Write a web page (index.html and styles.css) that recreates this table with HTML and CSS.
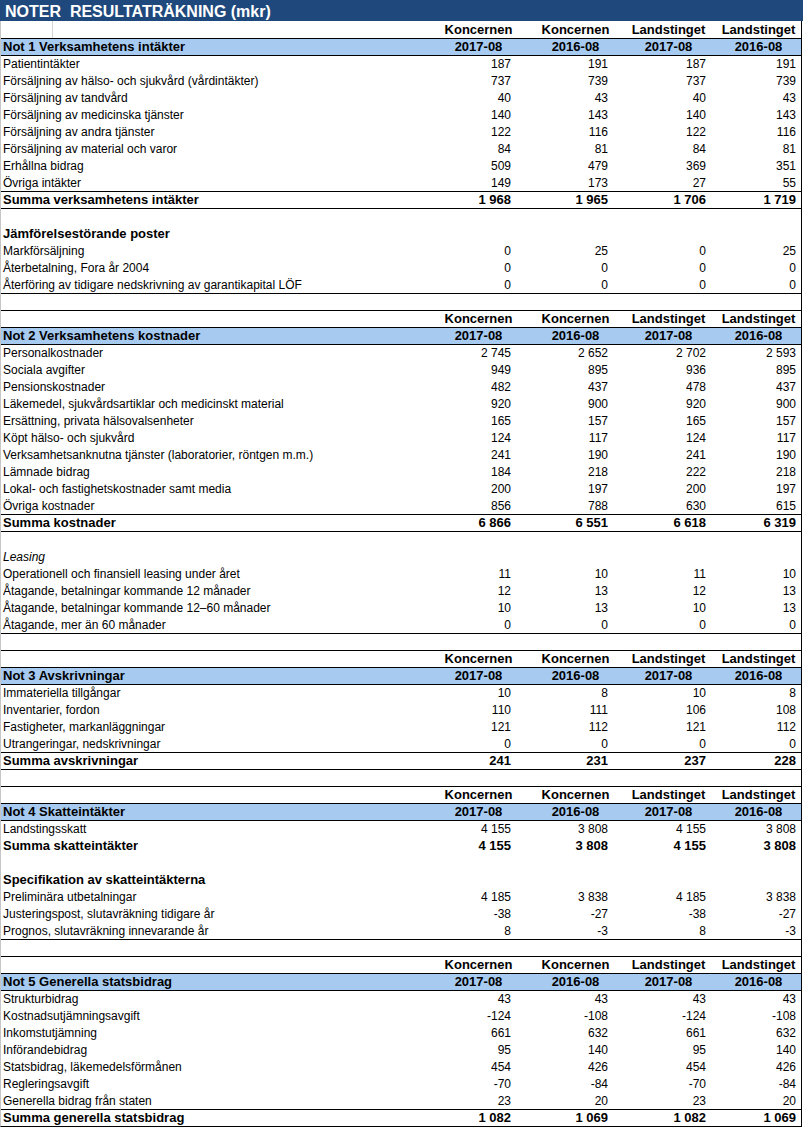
FILE: index.html
```html
<!DOCTYPE html>
<html lang="sv">
<head>
<meta charset="utf-8">
<title>Noter resultaträkning</title>
<link rel="stylesheet" href="styles.css">
</head>
<body>
<div class="title">NOTER  RESULTATRÄKNING (mkr)</div>
<div class="sheet">
  <!-- Not 1 -->
  <div class="row hdr"><div class="lab"><div class="gridmark"></div></div><div class="c c1">Koncernen</div><div class="c c2">Koncernen</div><div class="c c3">Landstinget</div><div class="c c4">Landstinget</div></div>
  <div class="row note lt"><div class="lab">Not 1 Verksamhetens intäkter</div><div class="c c1">2017-08</div><div class="c c2">2016-08</div><div class="c c3">2017-08</div><div class="c c4">2016-08</div></div>
  <div class="row lt"><div class="lab">Patientintäkter</div><div class="n">187</div><div class="n">191</div><div class="n">187</div><div class="n">191</div></div>
  <div class="row"><div class="lab">Försäljning av hälso- och sjukvård (vårdintäkter)</div><div class="n">737</div><div class="n">739</div><div class="n">737</div><div class="n">739</div></div>
  <div class="row"><div class="lab">Försäljning av tandvård</div><div class="n">40</div><div class="n">43</div><div class="n">40</div><div class="n">43</div></div>
  <div class="row"><div class="lab">Försäljning av medicinska tjänster</div><div class="n">140</div><div class="n">143</div><div class="n">140</div><div class="n">143</div></div>
  <div class="row"><div class="lab">Försäljning av andra tjänster</div><div class="n">122</div><div class="n">116</div><div class="n">122</div><div class="n">116</div></div>
  <div class="row"><div class="lab">Försäljning av material och varor</div><div class="n">84</div><div class="n">81</div><div class="n">84</div><div class="n">81</div></div>
  <div class="row"><div class="lab">Erhållna bidrag</div><div class="n">509</div><div class="n">479</div><div class="n">369</div><div class="n">351</div></div>
  <div class="row"><div class="lab">Övriga intäkter</div><div class="n">149</div><div class="n">173</div><div class="n">27</div><div class="n">55</div></div>
  <div class="row sum lt"><div class="lab">Summa verksamhetens intäkter</div><div class="n">1 968</div><div class="n">1 965</div><div class="n">1 706</div><div class="n">1 719</div></div>
  <div class="row lt"></div>
  <div class="row sub"><div class="lab">Jämförelsestörande poster</div></div>
  <div class="row"><div class="lab">Markförsäljning</div><div class="n">0</div><div class="n">25</div><div class="n">0</div><div class="n">25</div></div>
  <div class="row"><div class="lab">Återbetalning, Fora år 2004</div><div class="n">0</div><div class="n">0</div><div class="n">0</div><div class="n">0</div></div>
  <div class="row"><div class="lab">Återföring av tidigare nedskrivning av garantikapital LÖF</div><div class="n">0</div><div class="n">0</div><div class="n">0</div><div class="n">0</div></div>
  <div class="row lt"></div>

  <!-- Not 2 -->
  <div class="row hdr lt"><div class="lab"></div><div class="c c1">Koncernen</div><div class="c c2">Koncernen</div><div class="c c3">Landstinget</div><div class="c c4">Landstinget</div></div>
  <div class="row note lt"><div class="lab">Not 2 Verksamhetens kostnader</div><div class="c c1">2017-08</div><div class="c c2">2016-08</div><div class="c c3">2017-08</div><div class="c c4">2016-08</div></div>
  <div class="row lt"><div class="lab">Personalkostnader</div><div class="n">2 745</div><div class="n">2 652</div><div class="n">2 702</div><div class="n">2 593</div></div>
  <div class="row"><div class="lab">Sociala avgifter</div><div class="n">949</div><div class="n">895</div><div class="n">936</div><div class="n">895</div></div>
  <div class="row"><div class="lab">Pensionskostnader</div><div class="n">482</div><div class="n">437</div><div class="n">478</div><div class="n">437</div></div>
  <div class="row"><div class="lab">Läkemedel, sjukvårdsartiklar och medicinskt material</div><div class="n">920</div><div class="n">900</div><div class="n">920</div><div class="n">900</div></div>
  <div class="row"><div class="lab">Ersättning, privata hälsovalsenheter</div><div class="n">165</div><div class="n">157</div><div class="n">165</div><div class="n">157</div></div>
  <div class="row"><div class="lab">Köpt hälso- och sjukvård</div><div class="n">124</div><div class="n">117</div><div class="n">124</div><div class="n">117</div></div>
  <div class="row"><div class="lab">Verksamhetsanknutna tjänster (laboratorier, röntgen m.m.)</div><div class="n">241</div><div class="n">190</div><div class="n">241</div><div class="n">190</div></div>
  <div class="row"><div class="lab">Lämnade bidrag</div><div class="n">184</div><div class="n">218</div><div class="n">222</div><div class="n">218</div></div>
  <div class="row"><div class="lab">Lokal- och fastighetskostnader samt media</div><div class="n">200</div><div class="n">197</div><div class="n">200</div><div class="n">197</div></div>
  <div class="row"><div class="lab">Övriga kostnader</div><div class="n">856</div><div class="n">788</div><div class="n">630</div><div class="n">615</div></div>
  <div class="row sum lt"><div class="lab">Summa kostnader</div><div class="n">6 866</div><div class="n">6 551</div><div class="n">6 618</div><div class="n">6 319</div></div>
  <div class="row lt"></div>
  <div class="row it"><div class="lab">Leasing</div></div>
  <div class="row"><div class="lab">Operationell och finansiell leasing under året</div><div class="n">11</div><div class="n">10</div><div class="n">11</div><div class="n">10</div></div>
  <div class="row"><div class="lab">Åtagande, betalningar kommande 12 månader</div><div class="n">12</div><div class="n">13</div><div class="n">12</div><div class="n">13</div></div>
  <div class="row"><div class="lab">Åtagande, betalningar kommande 12–60 månader</div><div class="n">10</div><div class="n">13</div><div class="n">10</div><div class="n">13</div></div>
  <div class="row"><div class="lab">Åtagande, mer än 60 månader</div><div class="n">0</div><div class="n">0</div><div class="n">0</div><div class="n">0</div></div>
  <div class="row lt"></div>

  <!-- Not 3 -->
  <div class="row hdr lt"><div class="lab"></div><div class="c c1">Koncernen</div><div class="c c2">Koncernen</div><div class="c c3">Landstinget</div><div class="c c4">Landstinget</div></div>
  <div class="row note lt"><div class="lab">Not 3 Avskrivningar</div><div class="c c1">2017-08</div><div class="c c2">2016-08</div><div class="c c3">2017-08</div><div class="c c4">2016-08</div></div>
  <div class="row lt"><div class="lab">Immateriella tillgångar</div><div class="n">10</div><div class="n">8</div><div class="n">10</div><div class="n">8</div></div>
  <div class="row"><div class="lab">Inventarier, fordon</div><div class="n">110</div><div class="n">111</div><div class="n">106</div><div class="n">108</div></div>
  <div class="row"><div class="lab">Fastigheter, markanläggningar</div><div class="n">121</div><div class="n">112</div><div class="n">121</div><div class="n">112</div></div>
  <div class="row"><div class="lab">Utrangeringar, nedskrivningar</div><div class="n">0</div><div class="n">0</div><div class="n">0</div><div class="n">0</div></div>
  <div class="row sum lt"><div class="lab">Summa avskrivningar</div><div class="n">241</div><div class="n">231</div><div class="n">237</div><div class="n">228</div></div>
  <div class="row lt"></div>

  <!-- Not 4 -->
  <div class="row hdr lt"><div class="lab"></div><div class="c c1">Koncernen</div><div class="c c2">Koncernen</div><div class="c c3">Landstinget</div><div class="c c4">Landstinget</div></div>
  <div class="row note lt"><div class="lab">Not 4 Skatteintäkter</div><div class="c c1">2017-08</div><div class="c c2">2016-08</div><div class="c c3">2017-08</div><div class="c c4">2016-08</div></div>
  <div class="row lt"><div class="lab">Landstingsskatt</div><div class="n">4 155</div><div class="n">3 808</div><div class="n">4 155</div><div class="n">3 808</div></div>
  <div class="row sum"><div class="lab">Summa skatteintäkter</div><div class="n">4 155</div><div class="n">3 808</div><div class="n">4 155</div><div class="n">3 808</div></div>
  <div class="row"></div>
  <div class="row sub"><div class="lab">Specifikation av skatteintäkterna</div></div>
  <div class="row"><div class="lab">Preliminära utbetalningar</div><div class="n">4 185</div><div class="n">3 838</div><div class="n">4 185</div><div class="n">3 838</div></div>
  <div class="row"><div class="lab">Justeringspost, slutavräkning tidigare år</div><div class="n">-38</div><div class="n">-27</div><div class="n">-38</div><div class="n">-27</div></div>
  <div class="row"><div class="lab">Prognos, slutavräkning innevarande år</div><div class="n">8</div><div class="n">-3</div><div class="n">8</div><div class="n">-3</div></div>
  <div class="row lt"></div>

  <!-- Not 5 -->
  <div class="row hdr lt"><div class="lab"></div><div class="c c1">Koncernen</div><div class="c c2">Koncernen</div><div class="c c3">Landstinget</div><div class="c c4">Landstinget</div></div>
  <div class="row note lt"><div class="lab">Not 5 Generella statsbidrag</div><div class="c c1">2017-08</div><div class="c c2">2016-08</div><div class="c c3">2017-08</div><div class="c c4">2016-08</div></div>
  <div class="row lt"><div class="lab">Strukturbidrag</div><div class="n">43</div><div class="n">43</div><div class="n">43</div><div class="n">43</div></div>
  <div class="row"><div class="lab">Kostnadsutjämningsavgift</div><div class="n">-124</div><div class="n">-108</div><div class="n">-124</div><div class="n">-108</div></div>
  <div class="row"><div class="lab">Inkomstutjämning</div><div class="n">661</div><div class="n">632</div><div class="n">661</div><div class="n">632</div></div>
  <div class="row"><div class="lab">Införandebidrag</div><div class="n">95</div><div class="n">140</div><div class="n">95</div><div class="n">140</div></div>
  <div class="row"><div class="lab">Statsbidrag, läkemedelsförmånen</div><div class="n">454</div><div class="n">426</div><div class="n">454</div><div class="n">426</div></div>
  <div class="row"><div class="lab">Regleringsavgift</div><div class="n">-70</div><div class="n">-84</div><div class="n">-70</div><div class="n">-84</div></div>
  <div class="row"><div class="lab">Generella bidrag från staten</div><div class="n">23</div><div class="n">20</div><div class="n">23</div><div class="n">20</div></div>
  <div class="row sum lt"><div class="lab">Summa generella statsbidrag</div><div class="n">1 082</div><div class="n">1 069</div><div class="n">1 082</div><div class="n">1 069</div></div>
</div>
</body>
</html>
```

FILE: styles.css
```css
html, body {
  margin: 0;
  padding: 0;
  background: #ffffff;
}

body {
  width: 803px;
  font-family: "Liberation Sans", Arial, sans-serif;
  color: #000000;
}

.title {
  height: 21px;
  background: #1f497d;
  color: #ffffff;
  font-weight: bold;
  font-size: 16px;
  line-height: 21px;
  padding-left: 5px;
  padding-top: 1px;
  white-space: pre;
  box-sizing: border-box;
}

.sheet {
  width: 800px;
  border-left: 1px solid #c6c6c6;
  border-right: 1px solid #000000;
  border-bottom: 1px solid #000000;
}

.row {
  display: grid;
  grid-template-columns: 442px 71px 97px 98px 90px;
  height: 17px;
  font-size: 12px;
  line-height: 15px;
  white-space: nowrap;
}

.row > div {
  padding-top: 2px;
}

.row.lt {
  box-shadow: inset 0 1px 0 #000000;
}

.lab {
  padding-left: 2px;
}

.n {
  text-align: right;
  padding-right: 3px;
}

.c {
  text-align: center;
}

.c2 { padding-left: 26px; }
.c3 { padding-left: 17px; }
.c4 { padding-left: 9px; }

.hdr,
.note,
.sum,
.sub {
  font-weight: bold;
  font-size: 13px;
}

.hdr > div,
.note > div,
.sum > div,
.sub > div {
  padding-top: 1px;
  line-height: 16px;
}

.note {
  background: #a6caf0;
}

.it {
  font-style: italic;
}

.row > .gridmark-cell,
.gridmark {
  width: 51px;
  height: 17px;
  border-right: 1px solid #d4d4d4;
  margin-left: -2px;
  margin-top: -1px;
}
```
